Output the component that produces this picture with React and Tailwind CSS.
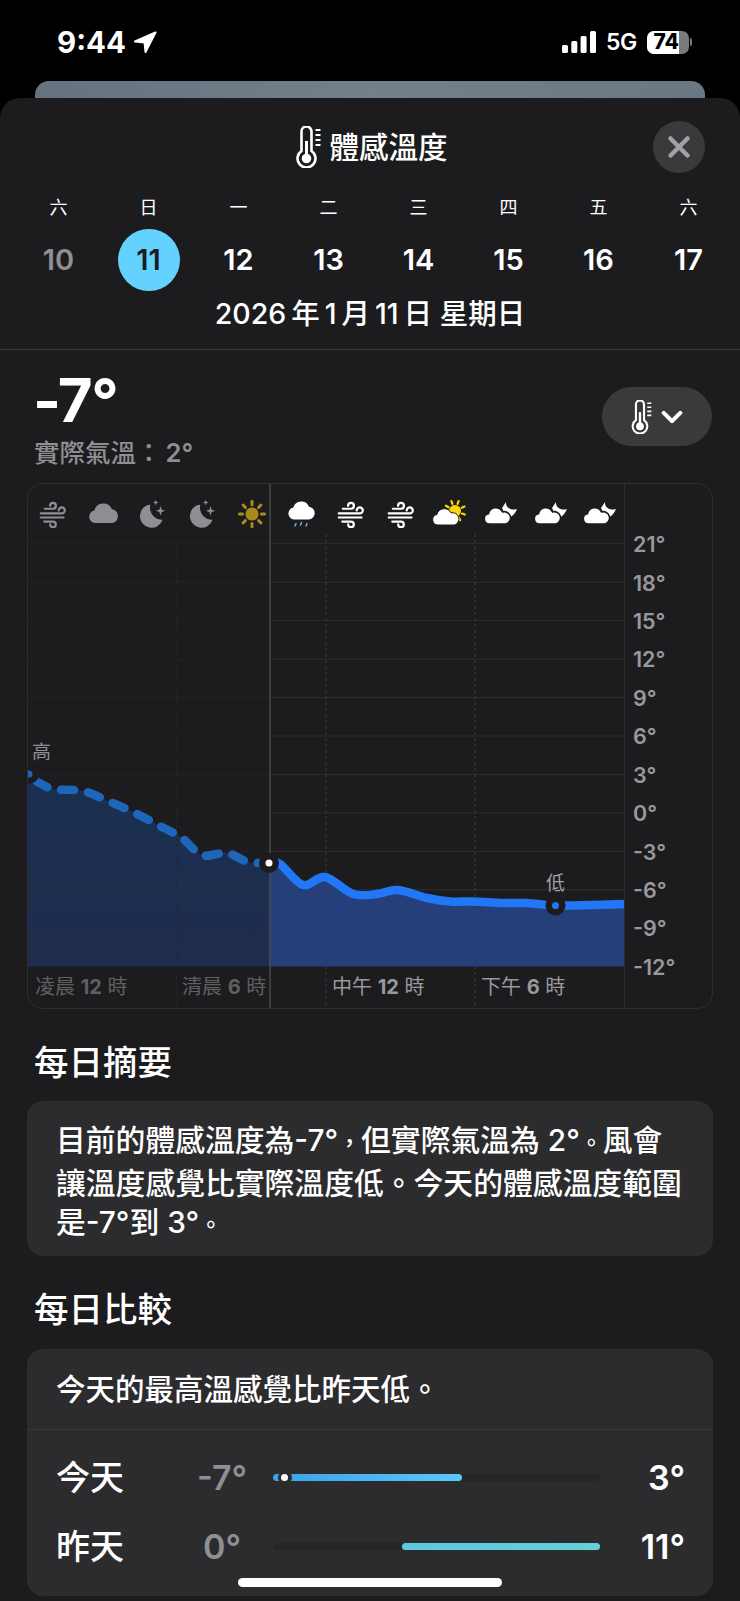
const DAYS = [
  ["六", "10"],
  ["日", "11"],
  ["一", "12"],
  ["二", "13"],
  ["三", "14"],
  ["四", "15"],
  ["五", "16"],
  ["六", "17"],
];

const Y_LABELS = ["21°", "18°", "15°", "12°", "9°", "6°", "3°", "0°", "-3°", "-6°", "-9°", "-12°"];
const GRID_Y = Y_LABELS.map((_, i) => 543.7 + i * 38.45);

// Curve points in page coordinates
const PAST = [
  [36, 781], [53, 789], [83, 791], [108, 801], [133, 812], [158, 825], [182, 838],
  [202, 855], [227, 853], [248, 862], [269, 863],
];
const FUTURE = [
  [269, 863], [280, 864], [303, 885], [325, 877], [353, 894], [377, 894], [398, 890],
  [427, 898], [450, 901.5], [473, 901.5], [503, 903], [527, 903], [555, 905.5], [590, 905], [624, 904],
];

function smooth(points) {
  let d = `M${points[0][0]} ${points[0][1]}`;
  for (let i = 0; i < points.length - 1; i++) {
    const p0 = points[i - 1] || points[i];
    const p1 = points[i];
    const p2 = points[i + 1];
    const p3 = points[i + 2] || p2;
    const c1x = p1[0] + (p2[0] - p0[0]) / 6;
    const c1y = p1[1] + (p2[1] - p0[1]) / 6;
    const c2x = p2[0] - (p3[0] - p1[0]) / 6;
    const c2y = p2[1] - (p3[1] - p1[1]) / 6;
    d += ` C${c1x} ${c1y} ${c2x} ${c2y} ${p2[0]} ${p2[1]}`;
  }
  return d;
}

function Thermometer({ className }) {
  return (
    <svg viewBox="0 0 26 42" className={className} fill="none" stroke="white">
      <path d="M5.500 5.500a5 5 0 0 1 10 0v19.500a9 9 0 1 1-10 0z" strokeWidth="2.600" />
      <circle cx="10.500" cy="32.500" r="4.800" fill="white" stroke="none" />
      <path d="M10.500 15v17" strokeWidth="3" />
      <path d="M19.500 4h5M19.500 9h5M19.500 14h5M19.500 19h5" strokeWidth="2" />
    </svg>
  );
}

function Wind({ color }) {
  return (
    <svg viewBox="0 0 24 24" className="h-[28px] w-[28px]" fill="none" stroke={color} strokeWidth="1.900" strokeLinecap="round">
      <path d="M5 7.500h7a2.500 2.500 0 1 0-2.500-2.500" />
      <path d="M1.500 11.500h18a2.600 2.600 0 1 0-2.600-2.600" />
      <path d="M1.500 15h19.500" />
      <path d="M4.500 18.500h7.500a2.400 2.400 0 1 1-2.400 2.400" />
    </svg>
  );
}

function Cloud({ color }) {
  return (
    <svg viewBox="0 0 32 32" className="h-[36px] w-[36px]">
      <path d="M9.500 24a5.600 5.600 0 0 1-1.200-11.100A8.300 8.300 0 0 1 24 11.800 6.200 6.200 0 0 1 24.200 24z" fill={color} />
    </svg>
  );
}

function Moon({ color }) {
  return (
    <svg viewBox="0 0 32 32" className="h-[34px] w-[34px]" fill={color}>
      <path d="M14.500 7A11 11 0 1 0 26 21.500 11.500 11.500 0 0 1 14.500 7z" />
      <path d="M24 8.500l1.100 3.400 3.400 1.100-3.400 1.100-1.100 3.400-1.100-3.400-3.400-1.100 3.400-1.100z" />
      <path d="M19.500 2.500l.7 2 2 .7-2 .7-.7 2-.7-2-2-.7 2-.7z" />
    </svg>
  );
}

function Sun({ color }) {
  const rays = [0, 45, 90, 135, 180, 225, 270, 315];
  return (
    <svg viewBox="0 0 32 32" className="h-[30px] w-[30px]">
      <circle cx="16" cy="16" r="7" fill={color} />
      {rays.map((r) => (
        <path key={r} d="M16 2.500v3.500" stroke={color} strokeWidth="3.200" strokeLinecap="round" transform={`rotate(${r} 16 16)`} />
      ))}
    </svg>
  );
}

function CloudRain() {
  return (
    <svg viewBox="0 0 32 32" className="h-[32px] w-[32px]">
      <path d="M9.500 21.500a6 6 0 0 1-1.200-11.900A8.300 8.300 0 0 1 24 8.800 6.400 6.400 0 0 1 24.200 21.500z" fill="white" />
      <path d="M11 25.500l-1 2.500M16.500 24.500l-1 2.500M22 25.500l-1 2.500" stroke="#64b5e0" strokeWidth="1.500" strokeLinecap="round" />
    </svg>
  );
}

function CloudSun() {
  return (
    <svg viewBox="0 0 36 32" className="h-[32px] w-[36px]">
      <circle cx="23" cy="13" r="6" fill="#ffd60a" />
      {[-60, -20, 20, 65, 110, 150].map((r) => (
        <path key={r} d="M23 2.500v3" stroke="#ffd60a" strokeWidth="2.200" strokeLinecap="round" transform={`rotate(${r} 23 13)`} />
      ))}
      <path d="M6 27a5.300 5.300 0 0 1-1-10.500 7.500 7.500 0 0 1 14-1.600 6.300 6.300 0 0 1 3.500 12.100z" fill="white" stroke="#1c1c1e" strokeWidth="1" />
    </svg>
  );
}

function CloudMoon() {
  return (
    <svg viewBox="0 0 36 32" className="h-[32px] w-[36px]">
      <path d="M24 4C23.500 9 28 13 35 11 33 16 29 20 25 20L20 10z" fill="white" />
      <path d="M7.500 26a5.200 5.200 0 0 1-1-10.300 7.400 7.400 0 0 1 14-1.800 6.200 6.200 0 0 1 3.500 12.100z" fill="white" stroke="#1c1c1e" strokeWidth="1.600" />
    </svg>
  );
}

function ChartArt() {
  const past = smooth(PAST);
  const future = smooth(FUTURE);
  return (
    <svg viewBox="28 484 596 524" className="absolute inset-0 h-[524px] w-[596px]">
      <defs>
        <linearGradient id="pastFill" x1="0" y1="0" x2="0" y2="1">
          <stop offset="0" stopColor="#1a3050" />
          <stop offset="1" stopColor="#1f2c4e" />
        </linearGradient>
      </defs>
      {GRID_Y.slice(0, 11).map((y) => (
        <g key={y}>
          <path d={`M28 ${y}H270`} stroke="#232325" strokeWidth="1" />
          <path d={`M270 ${y}H624`} stroke="#2e2e30" strokeWidth="1" />
        </g>
      ))}
      <path d={`${past} L269 966.500 L28 966.500 L28 773 L36 781z`} fill="url(#pastFill)" />
      <path d={`${future} L624 966.500 L269 966.500z`} fill="#243f7a" />
      <path d="M176.500 544V1008" stroke="#262628" strokeDasharray="3 3" />
      <path d="M326 534V1008M475 534V1008" stroke="#3c3c3e" strokeDasharray="3 3" />
      <path d="M270 484V1008" stroke="#4a4a4c" strokeWidth="1.500" />
      <path d={past} fill="none" stroke="#1d66ba" strokeWidth="8.500" strokeLinecap="round" strokeDasharray="13 14" />
      <path d={future} fill="none" stroke="#2277f6" strokeWidth="8.500" strokeLinejoin="round" />
      <circle cx="29" cy="774" r="10" fill="#1c1c1e" />
      <circle cx="29" cy="774" r="3.500" fill="#1d66ba" />
      <circle cx="269" cy="863" r="10" fill="#1c1c1e" />
      <circle cx="269" cy="863" r="3.500" fill="white" />
      <circle cx="555.500" cy="905.500" r="10" fill="#1c1c1e" />
      <circle cx="555.500" cy="905.500" r="3.500" fill="#2277f6" />
    </svg>
  );
}

function TimeLabel({ a, n, b, dim }) {
  return (
    <span className={`whitespace-nowrap text-[20px] ${dim ? "text-[#5f5f61]" : "text-[#98989d]"}`}>
      {a} <b className="font-bold">{n}</b> {b}
    </span>
  );
}

function CompareRow({ label, low, high, left, width, from, to, dot }) {
  return (
    <div className="flex h-[69px] items-center pl-[29px] pr-[28px]">
      <span className="w-[136px] text-[34px] font-medium text-white">{label}</span>
      <span className="w-[60px] text-center text-[34px] font-semibold text-[#8e8e93]">{low}</span>
      <div className="relative ml-[21px] h-[7px] w-[327px] rounded-full bg-[#262628]">
        <div
          className="h-[7px] rounded-full"
          style={{ marginLeft: left, width, background: `linear-gradient(90deg, ${from}, ${to})` }}
        />
        {dot && (
          <div className="absolute left-[5px] top-[-2px] h-[11px] w-[14px] rounded-full bg-[#2c2c2e] p-[2px] pl-[3px]">
            <div className="h-[7px] w-[7px] rounded-full bg-white" />
          </div>
        )}
      </div>
      <span className="flex-1 text-right text-[34px] font-semibold text-white">{high}</span>
    </div>
  );
}

export default function App() {
  return (
    <div className="relative h-[1601px] w-[740px] overflow-hidden bg-black font-['Inter','Noto_Sans_CJK_TC',sans-serif] text-white">
      {/* Status bar */}
      <div className="flex h-[81px] items-start justify-between pl-[57px] pr-[48px] pt-[24px]">
        <div className="flex items-center gap-[7px]">
          <span className="text-[29.500px] font-bold leading-[36px]">9:44</span>
          <svg viewBox="0 0 24 24" className="h-[24px] w-[24px]" fill="white" stroke="white" strokeWidth="2" strokeLinejoin="round">
            <path d="M22.500 2.500 2 11.500 11.500 12.500 12.500 22z" />
          </svg>
        </div>
        <div className="flex h-[36px] items-center">
          <svg viewBox="0 0 34 22" className="h-[22px] w-[34px]" fill="white">
            <rect x="0" y="14" width="6" height="8" rx="1.500" />
            <rect x="9.300" y="10" width="6" height="12" rx="1.500" />
            <rect x="18.600" y="5" width="6" height="17" rx="1.500" />
            <rect x="28" y="0" width="6" height="22" rx="1.500" />
          </svg>
          <span className="ml-[10px] w-[31px] whitespace-nowrap text-[23px] font-semibold tracking-tight">5G</span>
          <div className="ml-[10px] flex items-center">
            <div className="flex h-[23px] w-[42px] overflow-hidden rounded-[7px] bg-[#7a7a7c]">
              <div className="flex w-[32px] items-center justify-end bg-white text-[21px] font-extrabold text-black">
                74
              </div>
            </div>
            <div className="ml-[1px] h-[8px] w-[2px] rounded-r-full bg-[#7a7a7c]" />
          </div>
        </div>
      </div>

      {/* Card peeking out behind the sheet */}
      <div className="mx-[35px] h-[17px] rounded-t-[14px] bg-[linear-gradient(90deg,#65727f,#72808c_50%,#6a7884)]" />

      {/* Sheet */}
      <div className="h-[1503px] rounded-t-[20px] bg-[#1c1c1e]">
        <div className="grid grid-cols-[1fr_auto_1fr] items-center pl-[39px] pr-[35px] pt-[23px]">
          <div />
          <div className="flex items-center gap-[7px]">
            <Thermometer className="h-[42px] w-[26px]" />
            <span className="text-[29.500px] font-medium leading-[40px]">體感溫度</span>
          </div>
          <div className="flex h-[52px] w-[52px] items-center justify-center justify-self-end rounded-full bg-[#3a3a3c]">
            <svg viewBox="0 0 24 24" className="h-[24px] w-[24px]" fill="none" stroke="#a1a1a6" strokeWidth="4.500" strokeLinecap="round">
              <path d="M3.500 3.500l17 17M20.500 3.500l-17 17" />
            </svg>
          </div>
        </div>

        {/* Week strip */}
        <div className="mt-[22px] grid grid-cols-8 pl-[13.500px] pr-[6.500px]">
          {DAYS.map(([d], i) => (
            <div key={i} className="flex h-[24px] items-center justify-center text-[18px]">
              {d}
            </div>
          ))}
        </div>
        <div className="mt-[10px] grid grid-cols-8 pl-[13.500px] pr-[6.500px]">
          {DAYS.map(([, n], i) => (
            <div key={i} className="flex h-[62px] items-center justify-center">
              <span
                className={`flex h-[62px] w-[62px] items-center justify-center rounded-full text-[29px] font-semibold ${
                  i === 1 ? "bg-[#64d2ff] text-[#1c1c1e]" : i === 0 ? "text-[#8e8e93]" : "text-white"
                }`}
              >
                {n}
              </span>
            </div>
          ))}
        </div>
        <div className="mt-[5px] border-b border-[#38383a] pb-[17px] text-center text-[28.500px] font-medium leading-[36px]">
          2026{"\u2009"}年{"\u2009"}1{"\u2009"}月{"\u2009"}11{"\u2009"}日 星期日
        </div>

        {/* Current value */}
        <div className="flex h-[133px] items-start justify-between pl-[33px] pr-[28px]">
          <div className="pt-[20px]">
            <div className="text-[60px] font-bold leading-[60px] tracking-tight">-7°</div>
            <div className="ml-[1px] mt-[8px] text-[25.500px] font-medium leading-[30px] text-[#8e8e93]">
              實際氣溫：<b className="ml-[4px] font-semibold">2°</b>
            </div>
          </div>
          <div className="mt-[37px] flex h-[59px] w-[110px] items-center justify-center gap-[8px] rounded-full bg-[#3a3a3c]">
            <Thermometer className="h-[34px] w-[22px]" />
            <svg viewBox="0 0 24 16" className="h-[16px] w-[22px]" fill="none" stroke="white" strokeWidth="4.500" strokeLinecap="round" strokeLinejoin="round">
              <path d="M3 3.500l9 9 9-9" />
            </svg>
          </div>
        </div>

        {/* Chart card */}
        <div className="mx-[27px] flex h-[526px] overflow-hidden rounded-[16px] border border-[#2e2e30]">
          <div className="relative flex w-[596px] flex-col">
            <ChartArt />
            <div className="relative flex h-[59.700px] items-center">
              {[
                <Wind color="#8e8e93" />,
                <Cloud color="#8e8e93" />,
                <Moon color="#8e8e93" />,
                <Moon color="#8e8e93" />,
                <Sun color="#a68a1c" />,
                <CloudRain />,
                <Wind color="white" />,
                <Wind color="white" />,
                <CloudSun />,
                <CloudMoon />,
                <CloudMoon />,
                <CloudMoon />,
              ].map((icon, i) => (
                <div key={i} className="flex w-[49.700px] justify-center">
                  {icon}
                </div>
              ))}
            </div>
            <div className="relative h-[422.800px]">
              <span className="absolute left-[4px] top-[195px] text-[19px] leading-[28px] text-[#8e8e93]">高</span>
              <span className="absolute left-[518px] top-[326px] text-[19px] leading-[28px] text-[#a1a1a6]">低</span>
            </div>
            <div className="relative flex h-[41.500px] items-center">
              <div className="w-[154px] pl-[7px]"><TimeLabel a="凌晨" n="12" b="時" dim /></div>
              <div className="w-[150px]"><TimeLabel a="清晨" n="6" b="時" dim /></div>
              <div className="w-[149px]"><TimeLabel a="中午" n="12" b="時" /></div>
              <div><TimeLabel a="下午" n="6" b="時" /></div>
            </div>
          </div>
          <div className="flex-1 border-l border-[#2e2e30] pl-[8px] pt-[41px]">
            {Y_LABELS.map((t) => (
              <div key={t} className="flex h-[38.450px] items-center text-[21.500px] font-semibold text-[#98989d]">
                {t}
              </div>
            ))}
          </div>
        </div>

        {/* Daily summary */}
        <h2 className="mt-[34px] pl-[34px] text-[34.500px] font-medium leading-[40px]">每日摘要</h2>
        <div className="mx-[27px] mt-[18px] h-[155px] whitespace-nowrap rounded-[16px] bg-[#2c2c2e] pl-[29px] pt-[20px] text-[29.800px] font-medium leading-[39.500px]">
          目前的體感溫度為-7°<span className="text-[23px]">，</span>但實際氣溫為 2°<span className="text-[23px]">。</span>風會
          <br />
          讓溫度感覺比實際溫度低。今天的體感溫度範圍
          <br />
          是-7°到 3°<span className="text-[23px]">。</span>
        </div>

        {/* Daily comparison */}
        <h2 className="mt-[34px] pl-[34px] text-[34.500px] font-medium leading-[40px]">每日比較</h2>
        <div className="mx-[27px] mt-[19px] h-[247px] rounded-[16px] bg-[#2c2c2e]">
          <div className="flex h-[81px] items-center border-b border-[#3a3a3c] pl-[29px] text-[29.500px] font-medium">
            今天的最高溫感覺比昨天低。
          </div>
          <div className="pt-[13px]">
            <CompareRow label="今天" low="-7°" high="3°" left={0} width={189} from="#3aa3ea" to="#5ac8fa" dot />
            <CompareRow label="昨天" low="0°" high="11°" left={129} width={198} from="#5ac8e2" to="#64d2d6" />
          </div>
        </div>
      </div>

      {/* Home indicator */}
      <div className="absolute bottom-[14px] left-[238px] h-[9px] w-[264px] rounded-full bg-white" />
    </div>
  );
}
